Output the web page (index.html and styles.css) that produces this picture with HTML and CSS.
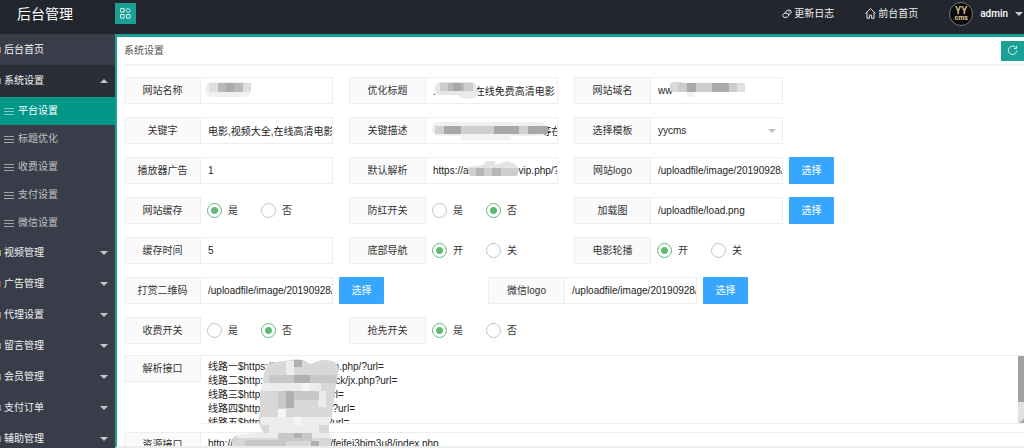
FILE: index.html
```html
<!DOCTYPE html>
<html lang="zh-CN">
<head>
<meta charset="utf-8">
<meta name="viewport" content="width=device-width, initial-scale=1">
<title>后台管理</title>
<link rel="stylesheet" href="styles.css">
</head>
<body>
<header class="topbar">
  <h1 class="brand">后台管理</h1>
  <button class="toggle" type="button" aria-label="菜单">
    <svg width="11" height="11" viewBox="0 0 11 11" fill="none" stroke="#d5f0ec"><path d="M.5.5h3.6v3.6H.5zM.5 6.5h3.6v3.6H.5zM6.5 6.5h3.6v3.6H6.5zM8.2 0l2.4 2.4-2.4 2.4-2.4-2.4z"/></svg>
  </button>
  <nav class="toplinks">
    <a href="#" class="toplink">
      <svg width="10" height="10" viewBox="0 0 10 10" fill="none" stroke="#e4e5e8"><path d="M.6 6.4 5.2 1.2h3.2L9.4 3 5 8.4H1.8zM2.6 4.2l3.4.2 1 1.6M6.6 2.8h1"/></svg>
      更新日志</a>
    <a href="#" class="toplink">
      <svg width="11" height="11" viewBox="0 0 11 11" fill="none" stroke="#e4e5e8"><path d="M.5 5.5l5-5 5 5M2 4.5v5.8h2.4V7.2h2.2v3.1H9V4.5"/></svg>
      前台首页</a>
    <a href="#" class="user">
      <span class="avatar"><span class="avatar-big">YY</span><span class="avatar-small">cms</span></span>
      admin
      <span class="caret"></span>
    </a>
  </nav>
</header>
<div class="shell">
  <nav class="side">
    <a href="#" class="item orange">后台首页</a>
    <a href="#" class="item open orange">系统设置<span class="caret up"></span></a>
    <a href="#" class="sub active"><span class="bars"></span>平台设置</a>
    <a href="#" class="sub"><span class="bars"></span>标题优化</a>
    <a href="#" class="sub"><span class="bars"></span>收费设置</a>
    <a href="#" class="sub"><span class="bars"></span>支付设置</a>
    <a href="#" class="sub"><span class="bars"></span>微信设置</a>
    <a href="#" class="item gold">视频管理<span class="caret"></span></a>
    <a href="#" class="item red">广告管理<span class="caret"></span></a>
    <a href="#" class="item orange">代理设置<span class="caret"></span></a>
    <a href="#" class="item orange">留言管理<span class="caret"></span></a>
    <a href="#" class="item orange">会员管理<span class="caret"></span></a>
    <a href="#" class="item">支付订单<span class="caret"></span></a>
    <a href="#" class="item orange">辅助管理<span class="caret"></span></a>
  </nav>
  <main class="main">
    <div class="head">
      <h2 class="title">系统设置</h2>
      <button class="refresh" type="button" aria-label="刷新">
        <svg width="11" height="11" viewBox="0 0 11 11" fill="none" stroke="#d9f3ef"><path d="M8.6 2.4A4.2 4.2 0 1 0 9.7 5.8M9.6.8v2.7H6.9"/></svg>
      </button>
    </div>
    <form class="form">
      <div class="row">
        <div class="field"><label class="label" for="name">网站名称</label><div class="box"><input class="input" id="name" type="text">
          <svg class="mosaic" width="52" height="18" viewBox="0 0 52 18"><rect x="4" y="1" width="46" height="15" rx="7" fill="#f0f0f0"/><path fill="#dedede" d="M8 2h9v9H8zM42 2h8v9h-8z"/><path fill="#b9b9b9" d="M17 2h8v9h-8zM33 2h9v9h-9z"/><path fill="#aaa" d="M25 2h8v9h-8z"/></svg></div></div>
        <div class="field"><label class="label" for="seo">优化标题</label><div class="box"><input class="input" id="seo" type="text" value=".&nbsp;&nbsp;&nbsp;&nbsp;&nbsp;&nbsp;&nbsp;&nbsp;&nbsp;&nbsp;&nbsp;&nbsp;&nbsp;&nbsp;在线免费高清电影">
          <svg class="mosaic" width="54" height="20" viewBox="0 0 54 20"><rect x="9" y="1" width="42" height="13" rx="6" fill="#e6e6e6"/><ellipse cx="42" cy="12" rx="11" ry="6" fill="#eaeaea"/><path fill="#ccc" d="M14 2h8v8h-8zM38 2h9v8h-9z"/><path fill="#b8b8b8" d="M22 2h16v8H22z"/><path fill="#a8a8a8" d="M27 2h8v8h-8z"/></svg></div></div>
        <div class="field"><label class="label" for="domain">网站域名</label><div class="box"><input class="input" id="domain" type="text" value="ww">
          <svg class="mosaic" width="98" height="20" viewBox="0 0 98 20"><rect x="19" y="1" width="14" height="10" rx="4" fill="#d8d8d8"/><path fill="#ccc" d="M27 2h59v9H27z"/><path fill="#e0e0e0" d="M86 2h8v9h-8z"/><path fill="#f2f2f2" d="M36 11h8v5h-8z"/><path fill="#aaa" d="M36 2h9v9h-9zM61 2h17v9H61z"/></svg></div></div>
      </div>
      <div class="row">
        <div class="field"><label class="label" for="kw">关键字</label><div class="box"><input class="input" id="kw" type="text" value="电影,视频大全,在线高清电影,"></div></div>
        <div class="field"><label class="label" for="desc">关键描述</label><div class="box"><input class="input" id="desc" type="text" value="&nbsp;&nbsp;&nbsp;&nbsp;&nbsp;&nbsp;&nbsp;&nbsp;&nbsp;&nbsp;&nbsp;&nbsp;&nbsp;&nbsp;&nbsp;&nbsp;&nbsp;&nbsp;&nbsp;&nbsp;&nbsp;&nbsp;&nbsp;&nbsp;&nbsp;&nbsp;&nbsp;&nbsp;&nbsp;&nbsp;&nbsp;&nbsp;&nbsp;&nbsp;&nbsp;&nbsp;&nbsp;&nbsp;&nbsp;等在">
          <svg class="mosaic" width="126" height="22" viewBox="0 0 126 22"><rect x="6" y="1" width="114" height="14" rx="6" fill="#f0f0f0"/><path fill="#f2f2f2" d="M35 12h50v7H35z"/><path fill="#d0d0d0" d="M9 5h112v8H9z"/><path fill="#a8a8a8" d="M18 5h17v8H18zM68 5h25v8H68zM102 5h20v8h-20z"/></svg></div></div>
        <div class="field"><label class="label" for="tpl">选择模板</label><div class="box"><select class="input select" id="tpl"><option>yycms</option></select><span class="caret select-caret"></span></div></div>
      </div>
      <div class="row">
        <div class="field"><label class="label" for="ad">播放器广告</label><div class="box"><input class="input" id="ad" type="text" value="1"></div></div>
        <div class="field"><label class="label" for="parse">默认解析</label><div class="box"><input class="input" id="parse" type="text" value="https://a&nbsp;&nbsp;&nbsp;&nbsp;&nbsp;&nbsp;&nbsp;&nbsp;&nbsp;&nbsp;&nbsp;&nbsp;&nbsp;&nbsp;&nbsp;&nbsp;&nbsp;&nbsp;vip.php/?url=">
          <svg class="mosaic" width="96" height="20" viewBox="0 0 96 20"><path fill="#e4e4e4" d="M41 6l16-2 3-4h9v4l12-4 8 3 4 5-3 7H46z"/><path fill="#cecece" d="M41 7h52l-2 8H44z"/><path fill="#b6b6b6" d="M50 7h8v8h-8zM66 7h9v8h-9z"/></svg></div></div>
        <div class="field"><label class="label" for="logo">网站logo</label><div class="box"><input class="input" id="logo" type="text" value="/uploadfile/image/20190928/201909"></div></div>
        <button class="pick" type="button">选择</button>
      </div>
      <div class="row">
        <div class="field" role="radiogroup" aria-labelledby="l1"><span class="label" id="l1">网站缓存</span><label class="radio"><input type="radio" name="cache" checked>是</label><label class="radio"><input type="radio" name="cache">否</label></div>
        <div class="field" role="radiogroup" aria-labelledby="l2"><span class="label" id="l2">防红开关</span><label class="radio"><input type="radio" name="guard">是</label><label class="radio"><input type="radio" name="guard" checked>否</label></div>
        <div class="field"><label class="label" for="load">加载图</label><div class="box"><input class="input" id="load" type="text" value="/uploadfile/load.png"></div></div>
        <button class="pick" type="button">选择</button>
      </div>
      <div class="row">
        <div class="field"><label class="label" for="ttl">缓存时间</label><div class="box"><input class="input" id="ttl" type="text" value="5"></div></div>
        <div class="field" role="radiogroup" aria-labelledby="l3"><span class="label" id="l3">底部导航</span><label class="radio"><input type="radio" name="foot" checked>开</label><label class="radio"><input type="radio" name="foot">关</label></div>
        <div class="field" role="radiogroup" aria-labelledby="l4"><span class="label" id="l4">电影轮播</span><label class="radio"><input type="radio" name="slide" checked>开</label><label class="radio"><input type="radio" name="slide">关</label></div>
      </div>
      <div class="row">
        <div class="field"><label class="label" for="qr">打赏二维码</label><div class="box"><input class="input" id="qr" type="text" value="/uploadfile/image/20190928/201909"></div></div>
        <button class="pick" type="button">选择</button>
        <div class="field apart"><label class="label" for="wx">微信logo</label><div class="box"><input class="input" id="wx" type="text" value="/uploadfile/image/20190928/201909"></div></div>
        <button class="pick" type="button">选择</button>
      </div>
      <div class="row">
        <div class="field" role="radiogroup" aria-labelledby="l5"><span class="label" id="l5">收费开关</span><label class="radio"><input type="radio" name="pay">是</label><label class="radio"><input type="radio" name="pay" checked>否</label></div>
        <div class="field" role="radiogroup" aria-labelledby="l6"><span class="label" id="l6">抢先开关</span><label class="radio"><input type="radio" name="early" checked>是</label><label class="radio"><input type="radio" name="early">否</label></div>
      </div>
      <div class="long">
        <label class="label" for="api">解析接口</label>
        <div class="box"><textarea class="area" id="api">线路一$https://c                   ip.php/?url=
线路二$http:/                         ck/jx.php?url=
线路三$http:                         rl=
线路四$http                         /?url=
线路五$http:                       ?url=</textarea>
          <span class="scroll"><span class="thumb"></span><span class="corner"></span></span>
          <svg class="mosaic over" width="142" height="94" viewBox="0 0 142 94">
            <defs><clipPath id="blob"><path d="M68 9q8-3 16-3 12-3 18-1 7 4 8 4 6-4 15-4 12 0 13 10l-4 20-3 27-3 8v8l2 4v14H35l-4-7q-1-8 6-9l26-2q-5-6-5-14l1-14q-1-14 3-24 1-12 6-17z"/></clipPath></defs>
            <g clip-path="url(#blob)">
              <path fill="#d8d8d8" d="M28 0h114v94H28z"/>
              <path fill="#ececec" d="M85 6h8v14h-8zM60 28h60v8H60zM60 62h72v8H60zM117 36h8v16h-8zM68 70h50v8H68zM36 78h95v5H36z"/>
              <path fill="#c8c8c8" d="M68 20h67v8H68zM77 36h41v9H77zM77 45h16v8H77zM77 78h34v8H77zM44 85h41v9H44z"/>
              <path fill="#b0b0b0" d="M93 20h16v8H93zM93 5h8v7h-8zM85 36h8v17h-8zM93 78h8v5h-8zM110 86h8v8h-8z"/>
              <path fill="#f5f5f5" d="M101 28h8v8h-8zM93 62h8v8h-8zM77 54h8v8h-8z"/>
            </g>
          </svg></div>
      </div>
      <div class="long">
        <label class="label" for="res">资源接口</label>
        <div class="box"><textarea class="area" id="res">http://                                  //feifei3bim3u8/index.php</textarea></div>
      </div>
    </form>
  </main>
</div>
</body>
</html>
```
FILE: styles.css
```css
* { box-sizing: border-box; }
body {
  margin: 0;
  height: 100vh;
  display: flex;
  flex-direction: column;
  overflow: hidden;
  font: 10px/14px "Liberation Sans", "Noto Sans CJK SC", sans-serif;
  color: #333;
  background: #fff;
}
a { color: inherit; text-decoration: none; }
button, input, select, textarea { font: inherit; color: inherit; margin: 0; }
button { border: 0; padding: 0; cursor: pointer; }
h1, h2 { margin: 0; font-weight: 400; }

.topbar {
  flex: none;
  height: 34px;
  padding-bottom: 7px;
  display: flex;
  align-items: center;
  background: #23262e;
  color: #fff;
}
.brand { width: 115px; padding-left: 17px; font-size: 14px; line-height: 20px; }
.toggle, .refresh { display: flex; align-items: center; justify-content: center; background: #1aa094; }
.toggle { width: 21px; height: 21px; }
.toplinks { margin-left: auto; display: flex; align-items: center; gap: 31px; }
.toplink { display: flex; align-items: center; gap: 2px; color: #f0f0f0; }
.user { display: flex; align-items: center; gap: 7px; padding-right: 1px; font-family: Roboto, sans-serif; font-weight: 500; }
.avatar {
  width: 24px;
  height: 24px;
  border: 1px solid #77787c;
  border-radius: 50%;
  background: #0a0a0a;
  color: #e4cda0;
  display: flex;
  flex-direction: column;
  align-items: center;
  justify-content: center;
}
.avatar-big { font-size: 10px; line-height: 9px; }
.avatar-small { font-size: 7px; line-height: 7px; font-weight: 700; }
.caret { width: 8px; border: 4px solid transparent; border-top-color: #c6c7ca; border-bottom: 0; }
.caret.up { border-top: 0; border-bottom: 4px solid #c6c7ca; }

.shell { flex: 1; min-height: 0; display: flex; }
.side { flex: none; width: 115px; overflow: hidden; background: #393d49; color: #f2f2f2; }
.item {
  height: 31px;
  display: flex;
  align-items: center;
  padding-right: 7px;
}
.item::before { content: ""; width: 1px; height: 6px; margin-right: 3px; background: #8a8c94; }
.item .caret { margin-left: auto; }
.item.open { height: 32px; background: #2b2e38; }
.item.orange::before { background: #b9825f; }
.item.gold::before { background: #b39a3d; }
.item.red::before { background: #a8434a; }
.sub { height: 28px; display: flex; align-items: center; gap: 4px; padding-left: 4px; color: #c0c2c7; }
.sub.active { background: #009688; color: #fff; }
.bars { width: 10px; height: 7px; border: solid #9fa2a9; border-width: 1px 0; background: linear-gradient(#9fa2a9, #9fa2a9) center / 100% 1px no-repeat; }
.active .bars { border-color: #7fcac3; background-image: linear-gradient(#7fcac3, #7fcac3); }

.main {
  flex: 1;
  min-width: 0;
  overflow: hidden;
  border: solid #1aa094;
  border-width: 3px 0 0 2px;
  border-bottom: 2px solid #ececec;
  padding-left: 7px;
}
.head { height: 29px; display: flex; align-items: center; justify-content: space-between; border-bottom: 2px solid #f4f4f4; }
.title { font-size: 10px; color: #555; }
.refresh { width: 23px; height: 20px; border-radius: 1px 0 0 1px; }
.form { padding-top: 11px; }
.row { display: flex; gap: 6px; margin-bottom: 13px; }
.field { flex: none; width: 209px; height: 27px; display: flex; }
.field + .field { margin-left: 10px; }
.field.apart { margin-left: 98px; }
.label {
  flex: none;
  width: 77px;
  height: 27px;
  border: 1px solid #ededed;
  border-radius: 1px;
  background: #fafafa;
  line-height: 25px;
  text-align: center;
}
.box { position: relative; flex: 1; min-width: 0; }
.input {
  display: block;
  width: 100%;
  height: 27px;
  padding: 0 0 0 7px;
  border: 1px solid #ededed;
  border-left: 0;
  border-radius: 0 1px 1px 0;
  background: #fff;
  color: #222;
  outline: 0;
}
.select { appearance: none; }
.select-caret { position: absolute; right: 7px; top: 12px; border-top-color: #c2c2c2; }
.mosaic { position: absolute; left: 0; top: 4px; pointer-events: none; }
.mosaic.over { top: 0; z-index: 1; }
.pick { width: 45px; height: 27px; border-radius: 1px; background: #36a6ff; color: #fff; }
.radio { display: flex; align-items: center; gap: 6px; margin-left: 23px; line-height: 25px; }
.label + .radio { margin-left: 6px; }
.radio input {
  appearance: none;
  width: 15px;
  height: 15px;
  border: 1px solid #c2c2c2;
  border-radius: 50%;
  background: #fff;
}
.radio input:checked { border-color: #5fb878; background: radial-gradient(circle, #5fb878 3px, #fff 4px); }
.long { display: flex; margin: -2px 0 8px; }
.long + .long { margin-top: 0; }
.long + .long .label { line-height: 23px; }
.area {
  display: block;
  width: 100%;
  height: 69px;
  padding: 4px 0 0 7px;
  border: 1px solid #ededed;
  border-width: 1px 0;
  resize: none;
  overflow: hidden;
  background: #fff;
  color: #222;
  outline: 0;
}
.scroll { position: absolute; right: 0; top: 1px; bottom: 1px; width: 6px; display: flex; flex-direction: column; justify-content: space-between; background: #e2e2e2; }
.thumb { height: 46px; background: #a0a0a0; }
.corner { height: 6px; background: linear-gradient(135deg, #dcdcdc 60%, #a8a8a8 60%); }
```
